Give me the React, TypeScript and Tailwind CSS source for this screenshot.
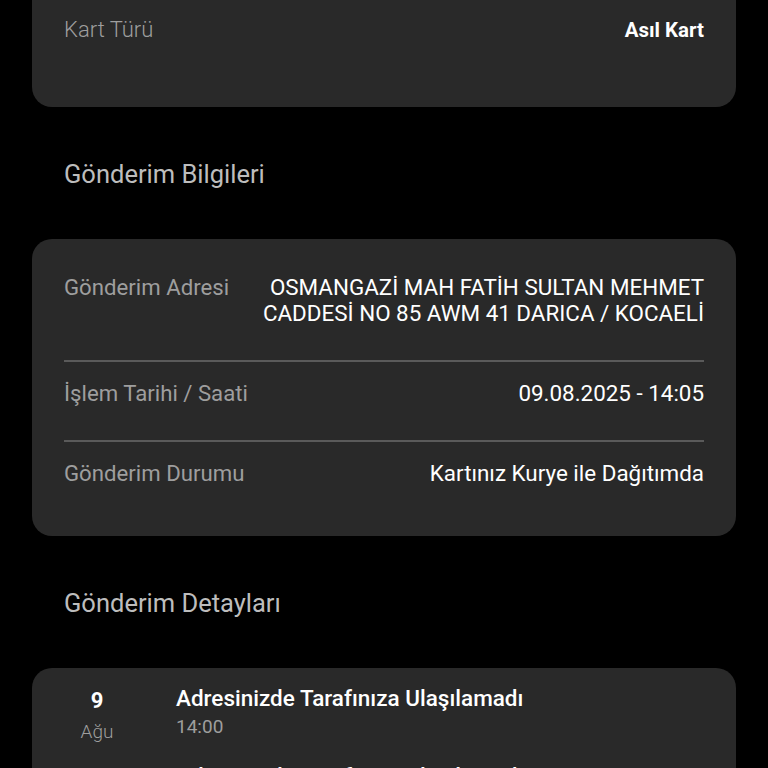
const rows = [
  {
    label: 'Gönderim Adresi',
    value: 'OSMANGAZİ MAH FATİH SULTAN MEHMET CADDESİ NO 85 AWM 41 DARICA / KOCAELİ',
  },
  { label: 'İşlem Tarihi / Saati', value: '09.08.2025 - 14:05' },
  { label: 'Gönderim Durumu', value: 'Kartınız Kurye ile Dağıtımda' },
];

// second event shares the same day, so its date column stays empty
const events = [
  { day: '9', month: 'Ağu', title: 'Adresinizde Tarafınıza Ulaşılamadı', time: '14:00' },
  { day: '', month: '', title: 'Adresinizde Tarafınıza Ulaşılamadı', time: '13:12' },
];

function SectionTitle({ children }: { children: string }) {
  return (
    <h2 className="mt-[52px] mb-[50px] px-8 text-[25.5px] leading-[30px] font-normal text-[#bdbdbd]">
      {children}
    </h2>
  );
}

export default function App() {
  return (
    <div
      className="h-[768px] w-[768px] overflow-hidden bg-black px-8"
      style={{ fontFamily: 'Roboto, "Noto Sans", sans-serif' }}
    >
      {/* Card type (top cut off by scroll) */}
      <div className="-mt-[20px] rounded-[20px] bg-[#292929] px-8 pt-[36px] pb-[63px]">
        <div className="flex items-center justify-between leading-[28px]">
          <span className="text-[22px] font-light text-[#9e9e9e]">Kart Türü</span>
          <span className="text-[20.5px] font-bold text-white">Asıl Kart</span>
        </div>
      </div>

      <SectionTitle>Gönderim Bilgileri</SectionTitle>

      <div className="rounded-[20px] bg-[#292929] px-8 pt-[17px]">
        {rows.map((row, i) => (
          <div
            key={row.label}
            className={
              i < rows.length - 1
                ? 'flex justify-between gap-8 border-b-2 border-[#5a5a5a] pt-[18px] pb-[34px]'
                : 'flex justify-between gap-8 pt-[18px] pb-[50px]'
            }
          >
            <span className="shrink-0 text-[22.2px] leading-[26px] text-[#9e9e9e]">{row.label}</span>
            <span className="max-w-[460px] text-right text-[22.4px] leading-[26px] text-white">
              {row.value}
            </span>
          </div>
        ))}
      </div>

      <SectionTitle>Gönderim Detayları</SectionTitle>

      <div className="rounded-[20px] bg-[#292929] px-8 pt-[16px]">
        {events.map((e, i) => (
          <div key={i} className="flex pb-[13px]">
            <div className="mt-[3px] flex w-[66px] shrink-0 flex-col items-center">
              <span className="text-[22px] leading-[28px] font-bold text-white">{e.day}</span>
              <span className="text-[19px] leading-[34px] font-light text-[#9e9e9e]">{e.month}</span>
            </div>
            <div className="ml-[46px] flex flex-col">
              <span className="text-[22.5px] leading-[28px] font-medium text-white">{e.title}</span>
              <span className="text-[19px] leading-[30px] text-[#9e9e9e]">{e.time}</span>
            </div>
          </div>
        ))}
      </div>
    </div>
  );
}
